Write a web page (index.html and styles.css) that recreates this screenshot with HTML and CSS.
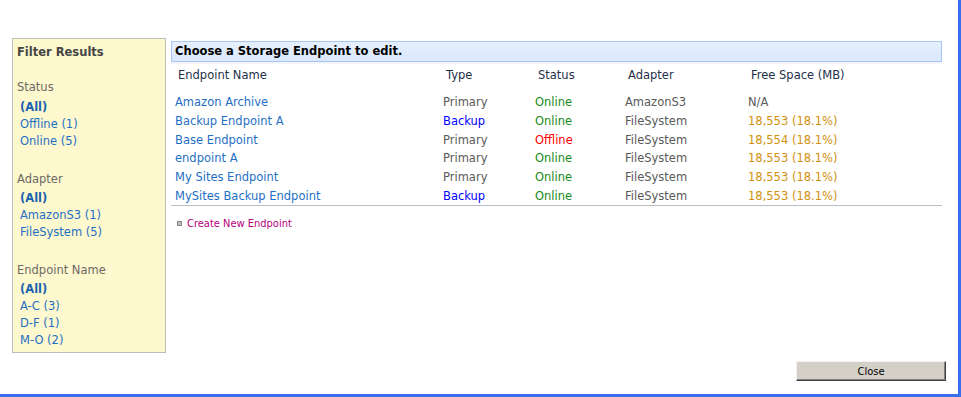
FILE: index.html
```html
<!DOCTYPE html>
<html>
<head>
    <meta charset="UTF-8">
    <title>Storage Endpoints</title>
    <link rel="stylesheet" href="styles.css">
</head>
<body>
<div class="dialog">
    <div class="layout">
        <div class="filter">
            <div class="filter-title">Filter Results</div>

            <div class="filter-group first">
                <div class="filter-label">Status</div>
                <a class="all">(All)</a>
                <a>Offline (1)</a>
                <a>Online (5)</a>
            </div>

            <div class="filter-group">
                <div class="filter-label">Adapter</div>
                <a class="all">(All)</a>
                <a>AmazonS3 (1)</a>
                <a>FileSystem (5)</a>
            </div>

            <div class="filter-group">
                <div class="filter-label">Endpoint Name</div>
                <a class="all">(All)</a>
                <a>A-C (3)</a>
                <a>D-F (1)</a>
                <a>M-O (2)</a>
            </div>
        </div>

        <div class="main">
            <div class="title-bar">Choose a Storage Endpoint to edit.</div>

            <table class="endpoints">
                <colgroup>
                    <col class="c-name">
                    <col class="c-type">
                    <col class="c-status">
                    <col class="c-adapter">
                    <col>
                </colgroup>
                <thead>
                    <tr>
                        <th>Endpoint Name</th>
                        <th>Type</th>
                        <th>Status</th>
                        <th>Adapter</th>
                        <th>Free Space (MB)</th>
                    </tr>
                </thead>
                <tbody>
                    <tr>
                        <td><a>Amazon Archive</a></td>
                        <td>Primary</td>
                        <td class="online">Online</td>
                        <td>AmazonS3</td>
                        <td>N/A</td>
                    </tr>
                    <tr>
                        <td><a>Backup Endpoint A</a></td>
                        <td class="backup">Backup</td>
                        <td class="online">Online</td>
                        <td>FileSystem</td>
                        <td class="space">18,553 (18.1%)</td>
                    </tr>
                    <tr>
                        <td><a>Base Endpoint</a></td>
                        <td>Primary</td>
                        <td class="offline">Offline</td>
                        <td>FileSystem</td>
                        <td class="space">18,554 (18.1%)</td>
                    </tr>
                    <tr class="short">
                        <td><a>endpoint A</a></td>
                        <td>Primary</td>
                        <td class="online">Online</td>
                        <td>FileSystem</td>
                        <td class="space">18,553 (18.1%)</td>
                    </tr>
                    <tr>
                        <td><a>My Sites Endpoint</a></td>
                        <td>Primary</td>
                        <td class="online">Online</td>
                        <td>FileSystem</td>
                        <td class="space">18,553 (18.1%)</td>
                    </tr>
                    <tr>
                        <td><a>MySites Backup Endpoint</a></td>
                        <td class="backup">Backup</td>
                        <td class="online">Online</td>
                        <td>FileSystem</td>
                        <td class="space">18,553 (18.1%)</td>
                    </tr>
                </tbody>
            </table>

            <div class="create">
                <span class="bullet"></span>
                <a>Create New Endpoint</a>
            </div>
        </div>
    </div>

    <div class="footer">
        <button type="button" class="close-btn">Close</button>
    </div>
</div>
</body>
</html>
```

FILE: styles.css
```css
body {
    margin: 0;
    font-family: "DejaVu Sans", Verdana, sans-serif;
    font-size: 11.5px;
    background-color: #fff;
}
a {
    color: #1f6fc5;
    text-decoration: none;
    cursor: pointer;
}
.dialog {
    width: 958px;
    height: 394px;
    border-right: 3px solid #3a6df0;
    border-bottom: 3px solid #3a6df0;
    display: flex;
    flex-direction: column;
}
.layout {
    display: flex;
    padding: 38px 0 0 12px;
}

/* filter panel */
.filter {
    width: 154px;
    height: 315px;
    background-color: #fdf8cd;
    border: 1px solid #bdbdbd;
    padding: 5px 0 0 4px;
    box-sizing: border-box;
    line-height: 17px;
}
.filter-title {
    font-weight: bold;
    color: #454545;
}
.filter-group {
    margin-top: 21px;
}
.filter-group.first {
    margin-top: 18px;
}
.filter-label {
    color: #6e6a66;
    margin-bottom: 2px;
}
.filter-group.first .filter-label {
    margin-bottom: 3px;
}
.filter-group a {
    display: block;
    padding-left: 3px;
}
.filter-group a.all {
    font-weight: bold;
    color: #1b62b0;
}

/* main area */
.main {
    width: 771px;
    margin: 3px 0 0 5px;
}
.title-bar {
    height: 19px;
    line-height: 19px;
    padding-left: 3px;
    font-weight: bold;
    color: #000;
    background: linear-gradient(#e6effd, #dbe8fc);
    border: 1px solid #a9c6f2;
    box-shadow: 0 2px 0 #f2f5fa;
}
.endpoints {
    width: 100%;
    border-collapse: collapse;
    table-layout: fixed;
    border-bottom: 1px solid #b9bec6;
}
.c-name { width: 268px; }
.c-type { width: 92px; }
.c-status { width: 90px; }
.c-adapter { width: 123px; }
.endpoints th {
    text-align: left;
    font-weight: normal;
    color: #26304a;
    padding: 5px 0 9px 7px;
    height: 16px;
    vertical-align: middle;
}
.endpoints td {
    padding: 0 0 0 4px;
    height: 19px;
    color: #5a5a5a;
    white-space: nowrap;
}
.endpoints tr.short td {
    height: 18px;
}
.endpoints td.backup {
    color: #0000ff;
}
.endpoints td.online {
    color: #1a8a1a;
}
.endpoints td.offline {
    color: #ff0000;
}
.endpoints td.space {
    color: #d0900c;
}
.create {
    display: flex;
    align-items: center;
    margin: 11px 0 0 6px;
    font-family: "DejaVu Sans Condensed", Tahoma, sans-serif;
    font-size: 11px;
}
.create a {
    color: #b5007a;
}
.bullet {
    width: 3px;
    height: 3px;
    background-color: #bdbdbd;
    border: 1px solid #8a8a8a;
    margin-right: 5px;
}

/* footer */
.footer {
    margin-top: auto;
    display: flex;
    justify-content: flex-end;
    padding: 0 12px 13px 0;
}
.close-btn {
    width: 150px;
    height: 20px;
    background-color: #d4d0c8;
    border: 1px solid;
    border-color: #f4f2ee #404040 #404040 #f4f2ee;
    box-shadow: inset -1px -1px 0 #808080;
    font-family: "DejaVu Sans Condensed", Tahoma, sans-serif;
    font-size: 11px;
    color: #000;
    padding: 0;
}
```
